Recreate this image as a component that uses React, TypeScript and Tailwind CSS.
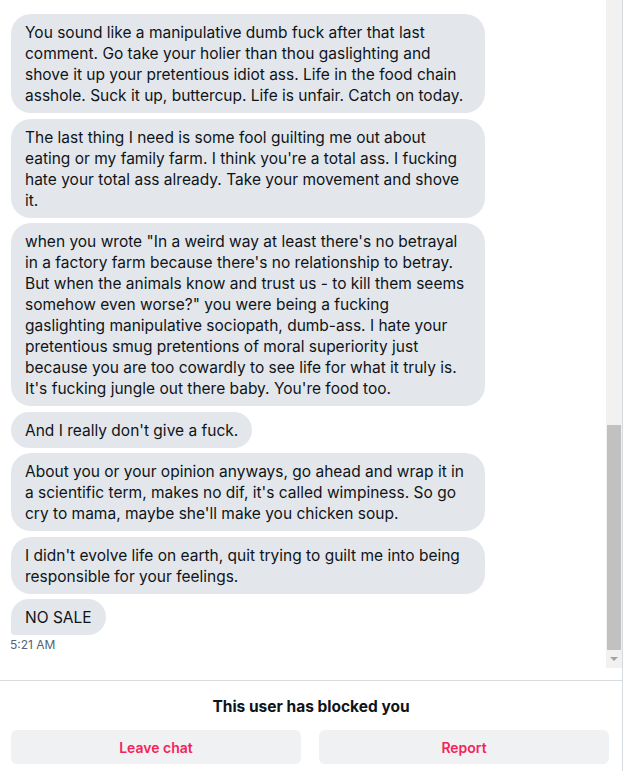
import React from "react";

const messages = [
  "You sound like a manipulative dumb fuck after that last comment. Go take your holier than thou gaslighting and shove it up your pretentious idiot ass. Life in the food chain asshole. Suck it up, buttercup. Life is unfair. Catch on today.",
  "The last thing I need is some fool guilting me out about eating or my family farm. I think you're a total ass. I fucking hate your total ass already. Take your movement and shove it.",
  "when you wrote \"In a weird way at least there's no betrayal in a factory farm because there's no relationship to betray. But when the animals know and trust us - to kill them seems somehow even worse?\" you were being a fucking gaslighting manipulative sociopath, dumb-ass. I hate your pretentious smug pretentions of moral superiority just because you are too cowardly to see life for what it truly is. It's fucking jungle out there baby. You're food too.",
  "And I really don't give a fuck.",
  "About you or your opinion anyways, go ahead and wrap it in a scientific term, makes no dif, it's called wimpiness. So go cry to mama, maybe she'll make you chicken soup.",
  "I didn't evolve life on earth, quit trying to guilt me into being responsible for your feelings.",
  "NO SALE",
];

export default function App() {
  return (
    <div
      className="w-[623px] h-[771px] bg-white border-r border-[#d6dbe0] flex flex-col overflow-hidden"
      style={{ fontFamily: "Inter, 'Noto Sans', sans-serif" }}
    >
      <div className="h-[668px] flex flex-row overflow-hidden">
        <div className="flex-1 pl-[11px] pt-[14px] flex flex-col">
          <div className="flex flex-col gap-[5.5px] items-start">
            {messages.map((m, i) => (
              <div
                key={i}
                className={
                  "max-w-[474px] bg-[#e3e7eb] text-[#0f1419] text-[15.5px] leading-[21px] px-[14px] pt-[8px] pb-[7px] rounded-[20px]" +
                  (i === messages.length - 1 ? " rounded-bl-[4px]" : "")
                }
              >
                {m}
              </div>
            ))}
          </div>
          <div className="text-[12px] leading-[16px] text-[#536471] mt-[2px] -ml-[1px]">5:21 AM</div>
        </div>
        <div className="w-[16px] bg-[#f1f1f1] flex flex-col">
          <div className="h-[425px]" />
          <div className="h-[225px] mx-[1px] bg-[#c1c1c1]" />
          <div className="h-[18px] flex items-center justify-center">
            <svg width="8" height="5" viewBox="0 0 8 5">
              <path d="M0 0 L8 0 L4 4 Z" fill="#a3a3a3" />
            </svg>
          </div>
        </div>
      </div>
      <div className="h-[12px]" />
      <div className="border-t border-[#d6dbe0] flex flex-col items-center">
        <div className="pt-[15px] text-[15.5px] leading-[21px] font-bold text-[#0f1419]">This user has blocked you</div>
        <div className="w-full flex flex-row gap-[18px] px-[11px] mt-[13px]">
          <button className="w-[290px] h-[34px] rounded-[6px] bg-[#eff1f3] text-[#f4245a] text-[14px] font-semibold">
            Leave chat
          </button>
          <button className="w-[290px] h-[34px] rounded-[6px] bg-[#eff1f3] text-[#f4245a] text-[14px] font-semibold">
            Report
          </button>
        </div>
      </div>
    </div>
  );
}
